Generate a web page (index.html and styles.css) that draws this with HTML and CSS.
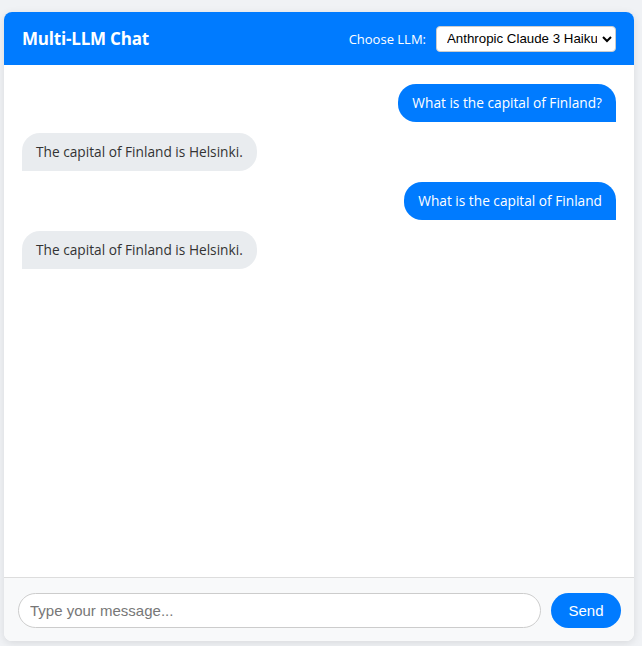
FILE: index.html
```html
<!DOCTYPE html>
<html>
<head>
<meta charset="utf-8">
<link rel="stylesheet" href="styles.css">
</head>
<body>
<div class="chat">
  <header class="chat-header">
    <h1 class="title">Multi-LLM Chat</h1>
    <div class="picker">
      <label class="picker-label" for="llm">Choose LLM:</label>
      <select id="llm" class="picker-select">
        <option>Anthropic Claude 3 Haiku</option>
      </select>
    </div>
  </header>
  <main class="messages">
    <div class="msg user">What is the capital of Finland?</div>
    <div class="msg bot">The capital of Finland is Helsinki.</div>
    <div class="msg user">What is the capital of Finland</div>
    <div class="msg bot">The capital of Finland is Helsinki.</div>
  </main>
  <footer class="composer">
    <input class="composer-input" type="text" placeholder="Type your message...">
    <button class="composer-send">Send</button>
  </footer>
</div>
</body>
</html>
```

FILE: styles.css
```css
html, body {
  margin: 0;
  padding: 0;
  background: #f0f2f5;
}
body {
  padding: 12px 8px 5px 4px;
  font-family: "Open Sans", "Noto Sans", sans-serif;
}
.chat {
  height: 629px;
  background: #fff;
  border-radius: 8px;
  box-shadow: 0 2px 8px rgba(0,0,0,0.1);
  display: flex;
  flex-direction: column;
  overflow: hidden;
}
.chat-header {
  height: 53px;
  flex: none;
  background: #007bff;
  color: #fff;
  display: flex;
  align-items: center;
  justify-content: space-between;
  padding: 0 18px;
  box-sizing: border-box;
}
.title {
  margin: 0;
  font-size: 17px;
  font-weight: 700;
  letter-spacing: -0.2px;
}
.picker {
  display: flex;
  align-items: center;
  gap: 10px;
}
.picker-label {
  font-size: 13px;
}
.picker-select {
  width: 180px;
  height: 26px;
  font-family: "Liberation Sans", Arial, sans-serif;
  font-size: 13.3px;
  color: #000;
  background: #fff;
  border: 1px solid #ccc;
  border-radius: 4px;
  padding: 0 2px 0 6px;
}
.messages {
  flex: 1;
  padding: 19px 18px;
  display: flex;
  flex-direction: column;
  gap: 11px;
}
.msg {
  max-width: 70%;
  padding: 0 14px;
  height: 38px;
  line-height: 38px;
  border-radius: 18px;
  font-size: 13.7px;
  box-sizing: border-box;
}
.user {
  align-self: flex-end;
  background: #007bff;
  color: #fff;
  border-bottom-right-radius: 0;
}
.bot {
  align-self: flex-start;
  background: #e9ecef;
  color: #333;
  border-bottom-left-radius: 0;
}
.composer {
  flex: none;
  border-top: 1px solid #ddd;
  background: #f8f9fa;
  padding: 15px 13px 13px 14px;
  display: flex;
  gap: 10px;
}
.composer-input {
  flex: 1;
  height: 35px;
  box-sizing: border-box;
  border: 1px solid #ccc;
  border-radius: 18px;
  padding: 0 11px;
  font-family: "Liberation Sans", Arial, sans-serif;
  font-size: 15px;
  background: #fff;
}
.composer-input::placeholder {
  color: #777;
}
.composer-send {
  width: 70px;
  height: 35px;
  border: none;
  border-radius: 18px;
  background: #007bff;
  color: #fff;
  font-family: "Liberation Sans", Arial, sans-serif;
  font-size: 15px;
}
```
